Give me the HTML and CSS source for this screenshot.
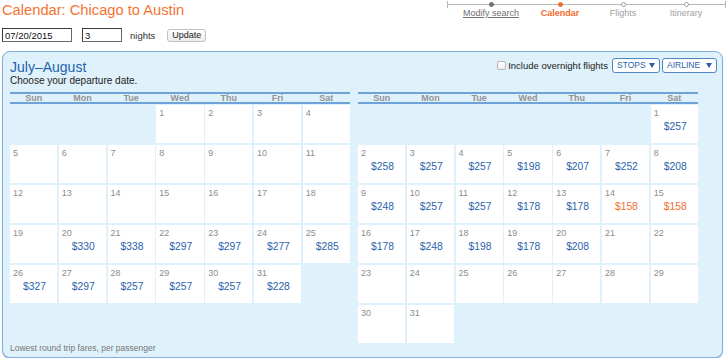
FILE: index.html
```html
<!DOCTYPE html>
<html lang="en">
<head>
<meta charset="utf-8">
<title>Calendar: Chicago to Austin</title>
<link rel="stylesheet" href="styles.css">
</head>
<body>
<header class="top">
  <h1 class="title">Calendar: Chicago to Austin</h1>
  <nav class="progress">
    <div class="step step-modify done"><span class="dot"></span><a class="step-label" href="#">Modify search</a></div>
    <div class="step step-calendar current"><span class="dot"></span><span class="step-label">Calendar</span></div>
    <div class="step step-flights"><span class="dot"></span><span class="step-label">Flights</span></div>
    <div class="step step-itinerary"><span class="dot"></span><span class="step-label">Itinerary</span></div>
  </nav>
</header>

<form class="controls">
  <input class="field field-date" type="text" value="07/20/2015">
  <input class="field field-nights" type="text" value="3">
  <span class="nights-label">nights</span>
  <button class="btn-update" type="button">Update</button>
</form>

<section class="panel">
  <div class="panel-head">
    <div>
      <h2 class="month">July–August</h2>
      <p class="hint">Choose your departure date.</p>
    </div>
    <div class="filters">
      <input class="check" type="checkbox">
      <span class="check-label">Include overnight flights</span>
      <button class="dropdown dropdown-stops" type="button">STOPS<span class="caret"></span></button>
      <button class="dropdown dropdown-airline" type="button">AIRLINE<span class="caret"></span></button>
    </div>
  </div>

  <div class="months">
    <div class="cal">
      <div class="dow"><span>Sun</span><span>Mon</span><span>Tue</span><span>Wed</span><span>Thu</span><span>Fri</span><span>Sat</span></div>
      <div class="days">
        <div class="day start-4"><span class="num">1</span></div>
        <div class="day"><span class="num">2</span></div>
        <div class="day"><span class="num">3</span></div>
        <div class="day"><span class="num">4</span></div>
        <div class="day"><span class="num">5</span></div>
        <div class="day"><span class="num">6</span></div>
        <div class="day"><span class="num">7</span></div>
        <div class="day"><span class="num">8</span></div>
        <div class="day"><span class="num">9</span></div>
        <div class="day"><span class="num">10</span></div>
        <div class="day"><span class="num">11</span></div>
        <div class="day"><span class="num">12</span></div>
        <div class="day"><span class="num">13</span></div>
        <div class="day"><span class="num">14</span></div>
        <div class="day"><span class="num">15</span></div>
        <div class="day"><span class="num">16</span></div>
        <div class="day"><span class="num">17</span></div>
        <div class="day"><span class="num">18</span></div>
        <div class="day"><span class="num">19</span></div>
        <div class="day"><span class="num">20</span><span class="fare">$330</span></div>
        <div class="day"><span class="num">21</span><span class="fare">$338</span></div>
        <div class="day"><span class="num">22</span><span class="fare">$297</span></div>
        <div class="day"><span class="num">23</span><span class="fare">$297</span></div>
        <div class="day"><span class="num">24</span><span class="fare">$277</span></div>
        <div class="day"><span class="num">25</span><span class="fare">$285</span></div>
        <div class="day"><span class="num">26</span><span class="fare">$327</span></div>
        <div class="day"><span class="num">27</span><span class="fare">$297</span></div>
        <div class="day"><span class="num">28</span><span class="fare">$257</span></div>
        <div class="day"><span class="num">29</span><span class="fare">$257</span></div>
        <div class="day"><span class="num">30</span><span class="fare">$257</span></div>
        <div class="day"><span class="num">31</span><span class="fare">$228</span></div>
      </div>
    </div>

    <div class="cal">
      <div class="dow"><span>Sun</span><span>Mon</span><span>Tue</span><span>Wed</span><span>Thu</span><span>Fri</span><span>Sat</span></div>
      <div class="days">
        <div class="day start-7"><span class="num">1</span><span class="fare">$257</span></div>
        <div class="day"><span class="num">2</span><span class="fare">$258</span></div>
        <div class="day"><span class="num">3</span><span class="fare">$257</span></div>
        <div class="day"><span class="num">4</span><span class="fare">$257</span></div>
        <div class="day"><span class="num">5</span><span class="fare">$198</span></div>
        <div class="day"><span class="num">6</span><span class="fare">$207</span></div>
        <div class="day"><span class="num">7</span><span class="fare">$252</span></div>
        <div class="day"><span class="num">8</span><span class="fare">$208</span></div>
        <div class="day"><span class="num">9</span><span class="fare">$248</span></div>
        <div class="day"><span class="num">10</span><span class="fare">$257</span></div>
        <div class="day"><span class="num">11</span><span class="fare">$257</span></div>
        <div class="day"><span class="num">12</span><span class="fare">$178</span></div>
        <div class="day"><span class="num">13</span><span class="fare">$178</span></div>
        <div class="day"><span class="num">14</span><span class="fare fare-low">$158</span></div>
        <div class="day"><span class="num">15</span><span class="fare fare-low">$158</span></div>
        <div class="day"><span class="num">16</span><span class="fare">$178</span></div>
        <div class="day"><span class="num">17</span><span class="fare">$248</span></div>
        <div class="day"><span class="num">18</span><span class="fare">$198</span></div>
        <div class="day"><span class="num">19</span><span class="fare">$178</span></div>
        <div class="day"><span class="num">20</span><span class="fare">$208</span></div>
        <div class="day"><span class="num">21</span></div>
        <div class="day"><span class="num">22</span></div>
        <div class="day"><span class="num">23</span></div>
        <div class="day"><span class="num">24</span></div>
        <div class="day"><span class="num">25</span></div>
        <div class="day"><span class="num">26</span></div>
        <div class="day"><span class="num">27</span></div>
        <div class="day"><span class="num">28</span></div>
        <div class="day"><span class="num">29</span></div>
        <div class="day"><span class="num">30</span></div>
        <div class="day"><span class="num">31</span></div>
      </div>
    </div>
  </div>

  <p class="note">Lowest round trip fares, per passenger</p>
</section>
</body>
</html>
```

FILE: styles.css
```css
* {
  box-sizing: border-box;
}

body {
  margin: 0;
  width: 728px;
  background: #fff;
  color: #222;
  font-family: "Liberation Sans", Arial, sans-serif;
}

/* ---------- top bar ---------- */
.top {
  display: flex;
  justify-content: space-between;
  align-items: flex-start;
  height: 20px;
  padding: 0 2px;
}

.title {
  margin: 0;
  padding-top: 1px;
  font-size: 14.7px;
  line-height: 18px;
  font-weight: normal;
  color: #f37332;
}

.progress {
  position: relative;
  display: flex;
  width: 279px;
  height: 20px;
}

.progress::before {
  content: "";
  position: absolute;
  left: 0;
  right: 0;
  top: 4px;
  height: 1px;
  background: #b8b8b8;
}

.progress::after {
  content: "";
  position: absolute;
  left: 0;
  right: 0;
  top: 1px;
  height: 7px;
  border-left: 1px solid #b8b8b8;
  border-right: 1px solid #b8b8b8;
}

.step {
  position: relative;
  z-index: 1;
  display: flex;
  flex-direction: column;
  align-items: center;
}

.step-modify { width: 88px; }
.step-calendar { width: 50px; }
.step-flights { width: 76px; }
.step-itinerary { width: 50px; }

.dot {
  width: 5px;
  height: 5px;
  margin-top: 2px;
  border-radius: 50%;
  border: 1px solid #a0a0a0;
  background: #fff;
}

.done .dot {
  border-color: #707070;
  background: #707070;
}

.current .dot {
  border-color: #f26d2d;
  background: #f26d2d;
}

.step-label {
  margin-top: 1px;
  font-size: 9px;
  line-height: 11px;
  color: #a0a0a0;
  white-space: nowrap;
}

.done .step-label {
  color: #707070;
  text-decoration: underline;
}

.current .step-label {
  color: #f26d2d;
  font-weight: bold;
}

/* ---------- search controls ---------- */
.controls {
  display: flex;
  align-items: center;
  height: 14px;
  margin: 8px 0 0 2px;
}

.field {
  height: 14px;
  margin: 0;
  padding: 0 2px;
  border: 1px solid #6a6a6a;
  border-top-color: #3a3a3a;
  border-left-color: #3a3a3a;
  background: #fff;
  color: #111;
  font: 9.5px "Liberation Sans", Arial, sans-serif;
  outline: none;
}

.field-date { width: 70px; }
.field-nights { width: 40px; margin-left: 10px; }

.nights-label {
  margin-left: 8px;
  font-size: 9.5px;
  color: #333;
}

.btn-update {
  width: 39px;
  height: 13px;
  margin-left: 12px;
  padding: 0;
  border: 1px solid #c2c2c2;
  border-radius: 3px;
  background: linear-gradient(#ffffff, #ebebeb);
  color: #222;
  font: 9px/11px "Liberation Sans", Arial, sans-serif;
}

/* ---------- calendar panel ---------- */
.panel {
  width: 721px;
  margin: 9px 0 0 2px;
  padding: 6px 5px 4px 7px;
  border: 1px solid #7fb0de;
  border-radius: 8px;
  background: #dff1fa;
  box-shadow: 0 1px 1px rgba(60, 90, 130, 0.45);
}

.panel-head {
  display: flex;
  justify-content: space-between;
  align-items: flex-start;
}

.month {
  margin: 1px 0 0;
  font-size: 14px;
  line-height: 16px;
  font-weight: normal;
  color: #2363ad;
}

.hint {
  margin: 0;
  font-size: 10px;
  line-height: 11px;
  color: #222;
}

.filters {
  display: flex;
  align-items: center;
  height: 15px;
}

.check {
  appearance: none;
  -webkit-appearance: none;
  width: 9px;
  height: 9px;
  margin: 0 2px 0 0;
  border: 1px solid #b5b5b5;
  border-radius: 2px;
  background: linear-gradient(#ffffff, #f0f0f0);
}

.check-label {
  margin-right: 4px;
  font-size: 9.5px;
  color: #222;
}

.dropdown {
  display: flex;
  align-items: center;
  justify-content: space-between;
  height: 15px;
  padding: 0 4px 0 4px;
  border: 1px solid #4f88c6;
  border-radius: 3px;
  background: #fff;
  color: #2a5fa8;
  font: 8.5px/13px "Liberation Sans", Arial, sans-serif;
}

.dropdown-stops { width: 48px; }
.dropdown-airline { width: 55px; margin-left: 2px; }

.caret {
  width: 0;
  height: 0;
  border-left: 3px solid transparent;
  border-right: 3px solid transparent;
  border-top: 5px solid #2a5fa8;
}

.months {
  display: flex;
  gap: 8px;
  margin-top: 6px;
}

.cal {
  width: 340px;
}

.dow {
  display: grid;
  grid-template-columns: repeat(7, 1fr);
  column-gap: 1.5px;
  height: 12px;
  border-top: 2px solid #6fa3d8;
  border-bottom: 2px solid #6fa3d8;
  font-size: 9px;
  line-height: 8px;
  font-weight: bold;
  color: #939393;
  text-align: center;
}

.days {
  display: grid;
  grid-template-columns: repeat(7, 1fr);
  grid-auto-rows: 38px;
  gap: 2px 1.5px;
  margin-top: 1px;
}

.day {
  padding: 3px 3px 0;
  background: #fff;
}

.start-4 { grid-column-start: 4; }
.start-7 { grid-column-start: 7; }

.num {
  display: block;
  font-size: 9px;
  line-height: 11px;
  color: #8c8c8c;
}

.fare {
  display: block;
  margin: 2px 0 0 10px;
  font-size: 10.3px;
  line-height: 12px;
  color: #2a62ab;
}

.fare-low {
  color: #f26d2d;
}

.note {
  margin: 0;
  font-size: 8.5px;
  line-height: 10px;
  color: #777;
}
```
